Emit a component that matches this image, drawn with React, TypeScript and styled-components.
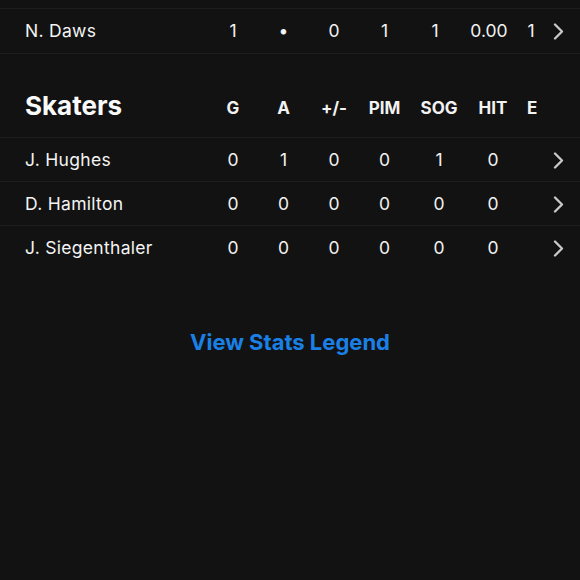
import React from "react";
import styled, { createGlobalStyle } from "styled-components";

const Global = createGlobalStyle`
  html, body { margin: 0; padding: 0; background: #121212; }
  body { font-family: Inter, "Noto Sans", "Liberation Sans", sans-serif; color: #f2f2f2; }
`;

const Page = styled.div`
  width: 580px;
  height: 580px;
  background: #121212;
  padding-top: 8px;
  box-sizing: border-box;
  overflow: hidden;
`;

const Row = styled.div<{ $h: number }>`
  display: flex;
  align-items: center;
  height: ${(p) => p.$h}px;
  padding-top: 1px;
  border-top: 1px solid #1d1d1f;
  box-sizing: border-box;
`;

const HeaderRow = styled.div`
  display: flex;
  align-items: flex-end;
  height: 84px;
  padding-bottom: 16px;
  border-top: 1px solid #1d1d1f;
  box-sizing: border-box;
`;

const Name = styled.div`
  flex: 1;
  padding-left: 25px;
  font-size: 17.5px;
  letter-spacing: 0.3px;
  color: #f4f4f4;
  white-space: nowrap;
  line-height: 1.3;
`;

const Title = styled.div`
  flex: 1;
  padding-left: 25px;
  font-size: 26px;
  font-weight: 700;
  color: #fafafa;
  line-height: 1.2;
`;

const Stats = styled.div<{ $lift?: number }>`
  width: 329px;
  display: flex;
  overflow: hidden;
  padding-bottom: ${(p) => p.$lift ?? 0}px;
`;

const Cell = styled.div<{ $w: number; $bold?: boolean; $left?: boolean }>`
  flex: 0 0 ${(p) => p.$w}px;
  text-align: ${(p) => (p.$left ? "left" : "center")};
  padding-left: ${(p) => (p.$left ? "9px" : "0")};
  box-sizing: border-box;
  font-size: ${(p) => (p.$bold ? "17px" : "17.5px")};
  font-weight: ${(p) => (p.$bold ? 700 : 400)};
  color: #f2f2f2;
  white-space: nowrap;
  line-height: 1.3;
`;

const ChevronCell = styled.div`
  width: 43px;
  display: flex;
  justify-content: center;
  align-items: center;
`;

const LinkWrap = styled.div`
  display: flex;
  justify-content: center;
  padding-top: 59px;
`;

const Link = styled.div`
  font-size: 22px;
  font-weight: 700;
  color: #1a80e6;
  line-height: 1.3;
`;

const Chevron = () => (
  <svg width="13" height="17" viewBox="0 0 13 17">
    <path d="M3 1.5 L10 8.5 L3 15.5" fill="none" stroke="#c9c9c9" strokeWidth="2.3" strokeLinecap="round" strokeLinejoin="round" />
  </svg>
);

const goalieWidths = [50, 51, 50, 51, 50, 58, 26, 40];
const skaterWidths = [50, 51, 50, 51, 58, 50, 60];

const skaters = [
  { name: "J. Hughes", stats: ["0", "1", "0", "0", "1", "0", ""] },
  { name: "D. Hamilton", stats: ["0", "0", "0", "0", "0", "0", ""] },
  { name: "J. Siegenthaler", stats: ["0", "0", "0", "0", "0", "0", ""] },
];

const headers = ["G", "A", "+/-", "PIM", "SOG", "HIT", "E"];

export default function App() {
  return (
    <>
      <Global />
      <Page>
        <Row $h={45}>
          <Name>N. Daws</Name>
          <Stats>
            {["1", "•", "0", "1", "1", "0.00", "1", ""].map((v, i) => (
              <Cell key={i} $w={goalieWidths[i]}>{v}</Cell>
            ))}
          </Stats>
          <ChevronCell><Chevron /></ChevronCell>
        </Row>
        <HeaderRow>
          <Title>Skaters</Title>
          <Stats $lift={2}>
            {headers.map((h, i) => (
              <Cell key={h} $w={skaterWidths[i]} $bold $left={i === 6}>{h}</Cell>
            ))}
          </Stats>
          <ChevronCell />
        </HeaderRow>
        {skaters.map((s) => (
          <Row key={s.name} $h={44}>
            <Name>{s.name}</Name>
            <Stats>
              {s.stats.map((v, i) => (
                <Cell key={i} $w={skaterWidths[i]}>{v}</Cell>
              ))}
            </Stats>
            <ChevronCell><Chevron /></ChevronCell>
          </Row>
        ))}
        <LinkWrap>
          <Link>View Stats Legend</Link>
        </LinkWrap>
      </Page>
    </>
  );
}
